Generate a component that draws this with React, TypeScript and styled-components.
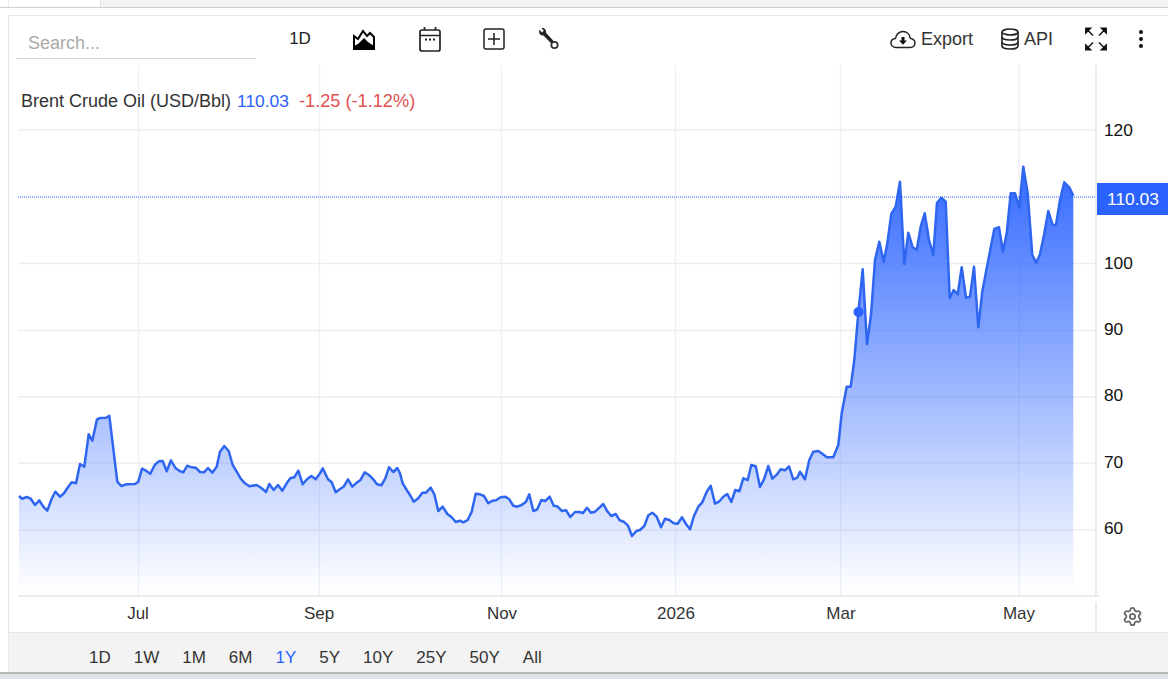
import React, { FC } from 'react';
import styled, { createGlobalStyle } from 'styled-components';
import { Settings } from 'lucide-react';

const BLUE = '#2962ff';

const GlobalStyle = createGlobalStyle`
  html, body {
    margin: 0;
    padding: 0;
    background: #fff;
    font-family: "Liberation Sans", Arial, sans-serif;
    overflow: hidden;
  }
`;

// traced from the reference, page coordinates
const POINTS: number[][] = [
  [19,496],[22,498.7],[26.7,497],[30.7,498.7],[35,505],[39.3,500.3],[43.3,506.7],[47.3,510.7],[51.7,498.7],[55.3,491.7],
  [60,496.7],[64,493.3],[68.3,486.7],[71.7,482.3],[76,483.3],[80,464],[84.3,466.7],[88.7,434.3],[92.3,440.7],[97,419.3],
  [100,418],[106,417.7],[109.3,415.7],[117.3,481.7],[121.3,486],[126.7,484.3],[135,484],[138.3,481.7],[142,468.7],[146,470.7],
  [150.3,473.7],[154.7,465],[158.7,461.3],[162.7,461],[166.7,471.3],[171,460.3],[175.7,468.3],[180,471.3],[183.3,472.3],[187.3,465.7],
  [191.7,467.3],[195.7,467.7],[200,472],[204,472.3],[208,468],[212.3,472.7],[216.7,466.7],[220,451.7],[224.3,446],[228.7,451],
  [232.7,465],[236.7,471.7],[240.7,478.7],[245,483.3],[249.3,486.3],[256.7,485],[261.7,488.3],[266,492],[269.3,484],[273.7,490],
  [278,485],[282.3,490.7],[286.7,483.3],[290.3,478.3],[294.3,477.3],[298.3,470.7],[302.7,484.3],[307,479.3],[311.3,476],[315.7,479.3],
  [320,473.3],[322.7,468.3],[328,479.3],[331.7,482.3],[335.7,492.3],[340,489],[343.7,486.7],[348,479.3],[352.3,486.7],[356.7,482.7],
  [360.7,479.7],[364.7,472.3],[369.3,475.3],[373.3,479.3],[377,484.3],[381.3,485.3],[385.3,478.3],[389,467.3],[393.3,472],[397.3,468],
  [400,473.3],[402.7,483.3],[406.7,490],[410,495],[413.7,501.7],[418.3,498.3],[422.3,492.7],[426,492.7],[430.7,487.7],[434.3,494.3],
  [438.3,511],[442.7,506.7],[447.3,514],[451.7,517.3],[455.7,522],[460,520.7],[463.3,522.3],[467.7,520],[471.7,511.7],[475.7,493.7],
  [480,494.3],[484,496],[488.3,503.3],[492.3,500.7],[496,500.3],[500.7,497.3],[505,496.7],[509,499],[513.3,505.7],[517.3,506.7],
  [521.7,505],[526,501.7],[529.3,494.3],[533.3,511],[537.3,509.3],[541.3,500],[545.3,501],[549.7,496.7],[553.7,505.7],[557.3,506.3],
  [562,511],[566,510.3],[570.3,517],[575,512],[579.3,512],[583,513],[587,507.7],[591,512.7],[595,511.7],[603.3,504],
  [607.3,511.3],[611.3,516],[615.7,514],[619.7,520.3],[623.7,521.7],[628,525.7],[632,536],[636.3,531],[640,530],[644.3,526],
  [648.3,515.3],[652.3,512.7],[656.7,516.7],[661,527.3],[665,518.7],[669.3,520],[673.7,523.3],[677.7,523.7],[682,517.3],[686,524],
  [690,529.3],[694,516],[698.3,506.7],[702.3,502.3],[706.7,491.7],[710.7,485.7],[715,503.7],[719,501.7],[723.3,496.7],[727.3,494],
  [731.3,502],[735.3,490],[739.3,491.3],[743.3,478.3],[747.7,480],[751.3,465],[755.7,466.3],[760,487],[764,479.3],[768.3,466],
  [772.3,478.7],[776.7,474.7],[780.7,469.3],[785,470.3],[789,466.3],[793.3,479.3],[797.3,477.7],[800,471.7],[805,479.3],[809.3,460],
  [813.3,451.7],[818.3,451],[822.7,454],[826.7,457.3],[833.3,457.3],[838.3,445],[841.7,413.3],[846.7,386.7],[850.7,386.7],[854.3,360],
  [858.3,313],[862.7,269.3],[867,344],[871,315],[875,260],[879.3,241.7],[883.7,261.7],[887.3,243.3],[891.3,214],[895.7,206.7],
  [900,181.7],[904.3,264],[908.3,232.7],[912.7,247.3],[916.7,250],[920.7,226.7],[924.7,213.3],[929,240],[933.3,255],[937,202.7],
  [941.3,197.7],[945.7,201.7],[949.7,298.3],[953.7,290],[957.7,294.3],[961.7,267.3],[966,297.7],[970,296.7],[974,266.7],[978.3,327.3],
  [982.3,291.7],[986.7,268.3],[994.3,229],[999,227.3],[1003,251.7],[1006.7,233.3],[1010.7,193.3],[1015,193.3],[1019.3,207.3],[1023.3,166.7],
  [1027.7,193.3],[1032.3,255],[1036.3,262.7],[1040,254.3],[1044,235],[1048.3,211],[1052.7,225],[1056,225],[1060,200],[1064.3,182.3],
  [1069.3,187.3],[1073.3,195.7]
];

const LINE = POINTS.map((p) => p.join(',')).join(' ');
const AREA = `19,596 ${LINE} 1073.3,596`;

const Y_TICKS = [
  { label: '120', y: 130, labelY: 130 },
  { label: '100', y: 263.5, labelY: 263 },
  { label: '90', y: 330.5, labelY: 329 },
  { label: '80', y: 397, labelY: 395 },
  { label: '70', y: 463, labelY: 462 },
  { label: '60', y: 530, labelY: 528 }
];

const X_TICKS = [
  { label: 'Jul', x: 138, gridX: 138.5 },
  { label: 'Sep', x: 319, gridX: 319.5 },
  { label: 'Nov', x: 502, gridX: 501.5 },
  { label: '2026', x: 676, gridX: 675.5 },
  { label: 'Mar', x: 841, gridX: 840.5 },
  { label: 'May', x: 1019, gridX: 1019 }
];

const RANGES = ['1D', '1W', '1M', '6M', '1Y', '5Y', '10Y', '25Y', '50Y', 'All'];

const Page = styled.div`
  width: 1168px;
  height: 679px;
  display: flex;
  flex-direction: column;
  background: #fff;
  overflow: hidden;
`;

const TopStrip = styled.div`
  height: 7px;
  flex: none;
  background: #f3f3f3;
  border-bottom: 1px solid #cfcfcf;
`;

const TopTab = styled.div`
  position: relative;
  width: 100px;
  height: 7px;
  background: #fff;
  border-right: 1px solid #e0e0e0;

  &::before {
    content: '';
    position: absolute;
    left: 8px;
    top: 0;
    bottom: 0;
    width: 1px;
    background: #e8e8e8;
  }
`;

const Body = styled.div`
  flex: 1;
  min-height: 0;
  padding: 7px 0 0 8px;
`;

const Card = styled.div`
  height: 100%;
  box-sizing: border-box;
  display: flex;
  flex-direction: column;
  border-top: 1px solid #e8e8e8;
  border-left: 1px solid #e8e8e8;
`;

const Toolbar = styled.div`
  height: 49px;
  flex: none;
  box-sizing: border-box;
  display: flex;
  align-items: center;
  padding: 0 21px 3px 7px;
`;

const Search = styled.input`
  width: 240px;
  height: 30px;
  box-sizing: border-box;
  align-self: flex-end;
  margin: 0 12px 3px 0;
  padding: 0 0 0 12px;
  border: 0;
  border-bottom: 1px solid #d4d4d4;
  outline: none;
  background: transparent;
  font: 18px "Liberation Sans", Arial, sans-serif;

  &::placeholder {
    color: #aaa;
    opacity: 1;
  }
`;

const ToolButton = styled.div<{ $w: number }>`
  width: ${(p) => p.$w}px;
  display: flex;
  justify-content: center;
  align-items: center;
  color: #222;
  font-size: 17px;
`;

const RightGroup = styled.div`
  margin-left: auto;
  display: flex;
  align-items: center;
  gap: 28px;
`;

const LabelButton = styled.div`
  display: flex;
  align-items: center;
  gap: 5px;
  color: #333;
  font-size: 18px;
`;

const FullButton = styled.div`
  display: flex;
  margin-left: 4px;
`;

const ChartArea = styled.div`
  position: relative;
  flex: 1;
  min-height: 0;
`;

const ChartSvg = styled.svg`
  display: block;
  width: 1159px;
  height: 567px;
  font-family: "Liberation Sans", Arial, sans-serif;
`;

const Legend = styled.div`
  position: absolute;
  left: 12px;
  top: 26px;
  display: flex;
  gap: 6px;
  font-size: 18px;
  line-height: 21px;
  color: #333;
`;

const LegendValue = styled.span`
  font-size: 17.4px;
  color: ${BLUE};
`;

const LegendChange = styled.span`
  margin-left: 4px;
  font-size: 18.2px;
  color: #e05252;
`;

const GridLine = styled.line`
  stroke: #eeeeee;
  stroke-width: 1.5;
`;

const VerticalGrid = styled.line`
  stroke: #eef1f7;
  stroke-width: 1.5;
`;

const AxisLine = styled.line`
  stroke: #e4e4e4;
  stroke-width: 1.5;
`;

const PriceLine = styled.line`
  stroke: ${BLUE};
  stroke-width: 1;
  stroke-dasharray: 1 1;
`;

const AreaShape = styled.polygon`
  fill: url(#areaFill);
`;

const PriceShape = styled.polyline`
  fill: none;
  stroke: #2f66f0;
  stroke-width: 2.5;
  stroke-linejoin: round;
`;

const YLabel = styled.text`
  fill: #111;
  font-size: 17.3px;
  dominant-baseline: central;
`;

const XLabel = styled.text`
  fill: #333;
  font-size: 17px;
  text-anchor: middle;
  dominant-baseline: central;
`;

const PriceTagBox = styled.rect`
  fill: ${BLUE};
`;

const PriceTagText = styled.text`
  fill: #fff;
  font-size: 17.4px;
  text-anchor: middle;
  dominant-baseline: central;
`;

const GearButton = styled.div`
  position: absolute;
  left: 1113px;
  top: 541px;
  display: flex;
  color: #666;
`;

const RangeBar = styled.div`
  height: 40px;
  flex: none;
  box-sizing: border-box;
  display: flex;
  align-items: center;
  gap: 23px;
  padding: 10px 0 0 80px;
  background: #f3f3f3;
  border-top: 1px solid #e4e4e4;
`;

const RangeItem = styled.span<{ $active?: boolean }>`
  font-size: 17px;
  color: ${(p) => (p.$active ? BLUE : '#333')};
`;

const BottomStrip = styled.div`
  height: 7px;
  flex: none;
  background: #dfe3ea;
  border-top: 2px solid #b9b9b9;
  box-sizing: border-box;
`;

const AreaIcon: FC = () => (
  <svg width="24" height="24" viewBox="0 0 24 24">
    <path d="M2 9 L6 12 L11 4 L15 9 L18 6 L22 10 V22 H2 Z" fill="#fff" stroke="#000" strokeWidth="2" strokeLinejoin="miter" />
    <path d="M2 19 L6 17 L12 11 L16 15 L22 19 V22 H2 Z" fill="#000" />
  </svg>
);

const CalendarIcon: FC = () => (
  <svg width="24" height="26" viewBox="0 0 24 26" fill="none" stroke="#222" strokeWidth="1.7">
    <rect x="2" y="4" width="20" height="21" rx="2" />
    <path d="M2 9.5 H22 M6.5 1 V4 M17.5 1 V4" />
    <path d="M7 13.5 H9 M11 13.5 H13 M15 13.5 H17" strokeWidth="2" />
  </svg>
);

const PlusIcon: FC = () => (
  <svg width="24" height="24" viewBox="0 0 24 24" fill="none" stroke="#222" strokeWidth="1.5">
    <rect x="2" y="2" width="20" height="20" rx="2" />
    <path d="M12 6 V18 M6 12 H18" />
  </svg>
);

const WrenchIcon: FC = () => (
  <svg width="24" height="24" viewBox="0 0 24 24" fill="none">
    <path d="M3.5 2.8 L6 5.4 L7.8 3.6 L5.4 1.2 C8 0.6 10.6 2.6 10 5.8 L18 14.5 L15.6 16.8 L7.4 8.4 C4.4 9 2.2 6 3.5 2.8 Z" fill="#222" />
    <circle cx="18.5" cy="18" r="3.2" stroke="#333" strokeWidth="1.8" fill="#fff" />
  </svg>
);

const CloudIcon: FC = () => (
  <svg width="26" height="19" viewBox="0 0 26 19">
    <path
      d="M6 17.5 C2.8 17.5 1 15.2 1 13 C1 10.6 2.8 8.8 5.4 8.6 C6.4 4.4 9.4 1.5 13 1.5 C17 1.5 19.8 4.6 20.4 8.4 C23 8.6 25 10.6 25 13.1 C25 15.6 23 17.5 20.2 17.5 Z"
      fill="none"
      stroke="#222"
      strokeWidth="1.5"
    />
    <path d="M11.5 7 H14.5 V10.5 H17 L13 14.8 L9 10.5 H11.5 Z" fill="#111" />
  </svg>
);

const DatabaseIcon: FC = () => (
  <svg width="18" height="22" viewBox="0 0 18 22" fill="none" stroke="#222" strokeWidth="1.6">
    <ellipse cx="9" cy="4" rx="8" ry="3" />
    <path d="M1 4 V18 C1 19.7 4.6 21 9 21 C13.4 21 17 19.7 17 18 V4" />
    <path d="M1 9 C1 10.7 4.6 12 9 12 C13.4 12 17 10.7 17 9" />
    <path d="M1 14 C1 15.7 4.6 17 9 17 C13.4 17 17 15.7 17 14" />
  </svg>
);

const FullscreenIcon: FC = () => (
  <svg width="22" height="24" viewBox="0 0 22 24" fill="#111" stroke="#111">
    <path d="M0.8 1.2 H5.6 L0.8 6 Z M2.5 3 L8 8.5" strokeWidth="1.4" />
    <path d="M21.2 1.2 H16.4 L21.2 6 Z M19.5 3 L14 8.5" strokeWidth="1.4" />
    <path d="M0.8 22.8 H5.6 L0.8 18 Z M2.5 21 L8 15.5" strokeWidth="1.4" />
    <path d="M21.2 22.8 H16.4 L21.2 18 Z M19.5 21 L14 15.5" strokeWidth="1.4" />
  </svg>
);

const DotsIcon: FC = () => (
  <svg width="12" height="22" viewBox="0 0 12 22" fill="#111">
    <circle cx="6" cy="4" r="2" />
    <circle cx="6" cy="11" r="2" />
    <circle cx="6" cy="18" r="2" />
  </svg>
);

const Chart: FC = () => (
  <ChartArea>
    <ChartSvg viewBox="9 65 1159 567">
      <defs>
        <linearGradient id="areaFill" gradientUnits="userSpaceOnUse" x1="0" y1="167" x2="0" y2="592">
          <stop offset="0" stopColor={BLUE} stopOpacity="0.95" />
          <stop offset="1" stopColor={BLUE} stopOpacity="0" />
        </linearGradient>
      </defs>
      {X_TICKS.map((t) => (
        <VerticalGrid key={t.label} x1={t.gridX} x2={t.gridX} y1={65} y2={596} />
      ))}
      {Y_TICKS.map((t) => (
        <GridLine key={t.label} x1={18} x2={1096} y1={t.y} y2={t.y} />
      ))}
      <AreaShape points={AREA} />
      <PriceShape points={LINE} />
      <circle cx="858.5" cy="312" r="5" fill={BLUE} />
      <PriceLine x1={18} x2={1096} y1={197} y2={197} />
      <AxisLine x1={18} x2={1100} y1={596} y2={596} />
      <AxisLine x1={1096} x2={1096} y1={65} y2={596} />
      <AxisLine x1={1096} x2={1096} y1={602} y2={632} />
      {Y_TICKS.map((t) => (
        <YLabel key={t.label} x={1104} y={t.labelY}>
          {t.label}
        </YLabel>
      ))}
      {X_TICKS.map((t) => (
        <XLabel key={t.label} x={t.x} y={613}>
          {t.label}
        </XLabel>
      ))}
      <PriceTagBox x={1097} y={183} width={71} height={32} />
      <PriceTagText x={1133} y={199}>110.03</PriceTagText>
    </ChartSvg>
    <Legend>
      <span>Brent Crude Oil (USD/Bbl)</span>
      <LegendValue>110.03</LegendValue>
      <LegendChange>-1.25 (-1.12%)</LegendChange>
    </Legend>
    <GearButton>
      <Settings size={21} strokeWidth={2} />
    </GearButton>
  </ChartArea>
);

export default function App() {
  return (
    <Page>
      <GlobalStyle />
      <TopStrip>
        <TopTab />
      </TopStrip>
      <Body>
        <Card>
          <Toolbar>
            <Search placeholder="Search..." />
            <ToolButton $w={64}>1D</ToolButton>
            <ToolButton $w={64}><AreaIcon /></ToolButton>
            <ToolButton $w={68}><CalendarIcon /></ToolButton>
            <ToolButton $w={60}><PlusIcon /></ToolButton>
            <ToolButton $w={48}><WrenchIcon /></ToolButton>
            <RightGroup>
              <LabelButton><CloudIcon />Export</LabelButton>
              <LabelButton><DatabaseIcon />API</LabelButton>
              <FullButton><FullscreenIcon /></FullButton>
              <DotsIcon />
            </RightGroup>
          </Toolbar>
          <Chart />
          <RangeBar>
            {RANGES.map((r) => (
              <RangeItem key={r} $active={r === '1Y'}>{r}</RangeItem>
            ))}
          </RangeBar>
        </Card>
      </Body>
      <BottomStrip />
    </Page>
  );
}
